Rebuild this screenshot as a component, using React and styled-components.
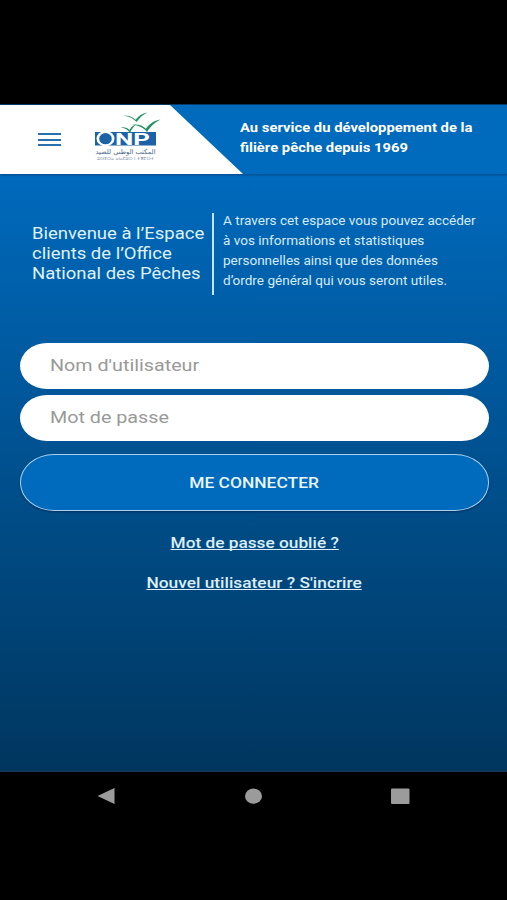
import { useState } from "react";
import styled, { createGlobalStyle } from "styled-components";

const GlobalStyle = createGlobalStyle`
  * {
    box-sizing: border-box;
  }
  body {
    margin: 0;
    background: #000;
    font-family: Roboto, "Noto Sans", sans-serif;
  }
`;
const Screen = styled.div`
  width: 507px;
  height: 900px;
  padding-top: 104px;
  background: #000;
  overflow: hidden;
`;
const Page = styled.main`
  height: 668px;
  display: flex;
  flex-direction: column;
  border-bottom: 1px solid #173a58;
  background: linear-gradient(180deg, #006abd 0%, #006abd 10%, #00365f 100%);
`;
const Header = styled.header`
  flex: none;
  height: 70px;
  display: flex;
  background: #006abd;
  border-top: 1px solid #003a68;
  box-shadow: 0 1px 2px rgba(0, 30, 70, 0.45);
`;
const Brand = styled.div`
  width: 243px;
  height: 69px;
  display: flex;
  background: #fff;
  clip-path: polygon(0 0, 170px 0, 100% 100%, 0 100%);
`;
const MenuButton = styled.button`
  width: 23px;
  height: 13px;
  margin: 28px 0 0 38px;
  padding: 0;
  display: flex;
  flex-direction: column;
  justify-content: space-between;
  border: none;
  background: none;
`;
const MenuBar = styled.span`
  height: 2px;
  background: #2b70ae;
`;
const LogoSvg = styled.svg`
  width: 72px;
  height: 54px;
  margin: 6px 0 0 31px;
  overflow: visible;
`;
// the type is wider than Roboto, each line is stretched from its origin
const Line = styled.span`
  display: block;
  width: max-content;
  white-space: nowrap;
  transform: scaleX(${(p) => p.$stretch || 1.16});
  transform-origin: ${(p) => p.$origin || "left"} center;
`;
const Slogan = styled.div`
  margin: 13px 0 0 -3px;
  color: #fff;
  font-size: 12.5px;
  font-weight: 700;
  line-height: 20px;
`;
const Intro = styled.section`
  display: flex;
  height: 82px;
  margin-top: 39px;
`;
const Title = styled.h1`
  width: 214px;
  margin: 0;
  padding: 11px 0 0 32px;
  border-right: 2px solid #c5e4f8;
  color: #dff0fb;
  font-size: 16px;
  font-weight: 400;
  line-height: 20px;
`;
const Description = styled.div`
  padding: 0 0 0 9px;
  margin-top: -2px;
  color: #d6ebf9;
  font-size: 12px;
  line-height: 20px;
`;
const Form = styled.form`
  margin: 48px 18px 0 20px;
  display: flex;
  flex-direction: column;
`;
const Field = styled.label`
  position: relative;
  height: 46px;
  margin-bottom: 6px;
  padding: 0 0 2px 30px;
  display: flex;
  align-items: center;
  border-radius: 27px / 23px;
  background: #fff;
  color: #999;
  font-size: 17px;
  line-height: 44px;
`;
const Input = styled.input`
  position: absolute;
  inset: 0;
  padding: 0 30px;
  border: none;
  outline: none;
  background: transparent;
  font-size: 17px;
`;
const SubmitButton = styled.button`
  height: 57px;
  margin-top: 7px;
  padding: 2px 0 0;
  display: flex;
  justify-content: center;
  align-items: center;
  border: 1.5px solid #a5d2f2;
  border-radius: 34px / 28px;
  background: #006abd;
  box-shadow: 0 1px 2px rgba(0, 20, 50, 0.5);
  color: #e8f5fd;
  font-family: inherit;
  font-size: 14.5px;
  font-weight: 500;
`;
const Links = styled.nav`
  display: flex;
  flex-direction: column;
  align-items: center;
  gap: 20px;
  margin-top: 23px;
  padding-left: 2px;
`;
const TextLink = styled(Line).attrs({ as: "a" })`
  color: #dceefa;
  font-size: 14.5px;
  font-weight: 500;
  line-height: 20px;
  text-decoration: underline;
  text-decoration-skip-ink: none;
  text-underline-offset: 1px;
`;
const SystemBar = styled.footer`
  display: flex;
  justify-content: space-between;
  padding: 15px 97px 0;
`;

const slogan = ["Au service du développement de la", "filière pêche depuis 1969"];
const title = ["Bienvenue à l’Espace", "clients de l’Office", "National des Pêches"];
const description = [
  "A travers cet espace vous pouvez accéder",
  "à vos informations et statistiques",
  "personnelles ainsi que des données",
  "d’ordre général qui vous seront utiles.",
];

const Logo = () => (
  <LogoSvg viewBox="0 0 72 54">
    <path d="M3 21h61v13.5H3z" fill="#1c62a6" />
    <ellipse cx="13.500" cy="27.700" rx="9" ry="7.600" fill="#fff" />
    <ellipse cx="13.500" cy="27.700" rx="6.300" ry="5.600" fill="#1c62a6" />
    <text
      x="23"
      y="34"
      fill="#fff"
      fontFamily="Roboto, sans-serif"
      fontSize="17"
      fontWeight="700"
      textLength="35"
      lengthAdjust="spacingAndGlyphs"
    >
      NP
    </text>
    <g fill="#259366">
      <path d="M31.5 4.5c5.500 0 9.500 1.500 12 4.300c3-3.800 6.500-6.300 12-7.300c-5 2.300-8 5.500-11 9.500c-3-3.500-7-5.500-13-6.500z" />
      <path d="M29 16.500c4-.5 6.500.5 8.500 2.500c1.500-3 3.500-4.500 6.500-5.500c-3 2.500-4.500 5-6 8.500c-2-3-4.500-5-9-5.500z" />
      <path d="M40 13.500c7-.5 11 1 13.800 4.300c3.500-5 8-8.300 14.700-9.300c-6 3-9.500 6.500-13.500 12.500c-3.500-4.500-8-6.500-15-7.500z" />
    </g>
    <text
      x="33.5"
      y="42.5"
      textAnchor="middle"
      fill="#46658c"
      fontFamily="DejaVu Sans, sans-serif"
      fontSize="6.5"
      textLength="60"
      lengthAdjust="spacingAndGlyphs"
    >
      المكتب الوطني للصيد
    </text>
    <text
      x="5"
      y="49"
      fill="#6f87a8"
      fontFamily="DejaVu Sans, sans-serif"
      fontSize="4"
      textLength="57"
      lengthAdjust="spacingAndGlyphs"
    >
      ⵓⵙⵉⵔⴰ ⴰⵏⴰⵎⵓⵔ ⵏ ⵜⴳⵎⵔⵜ
    </text>
  </LogoSvg>
);

const App = () => {
  //state
  const [username, setUsername] = useState("");
  const [password, setPassword] = useState("");

  return (
    <Screen>
      <GlobalStyle />
      <Page>
        <Header>
          <Brand>
            <MenuButton aria-label="Menu">
              <MenuBar />
              <MenuBar />
              <MenuBar />
            </MenuButton>
            <Logo />
          </Brand>
          <Slogan>
            {slogan.map((text) => (
              <Line key={text} $stretch={1.185}>
                {text}
              </Line>
            ))}
          </Slogan>
        </Header>
        <Intro>
          <Title>
            {title.map((text) => (
              <Line key={text} $stretch={1.155}>
                {text}
              </Line>
            ))}
          </Title>
          <Description>
            {description.map((text) => (
              <Line key={text} $stretch={1.13}>
                {text}
              </Line>
            ))}
          </Description>
        </Intro>
        <Form onSubmit={(e) => e.preventDefault()}>
          <Field>
            {!username && <Line>Nom d'utilisateur</Line>}
            <Input value={username} onChange={(e) => setUsername(e.target.value)} />
          </Field>
          <Field>
            {!password && <Line>Mot de passe</Line>}
            <Input
              type="password"
              value={password}
              onChange={(e) => setPassword(e.target.value)}
            />
          </Field>
          <SubmitButton type="submit">
            <Line $origin="center" $stretch={1.2}>
              ME CONNECTER
            </Line>
          </SubmitButton>
        </Form>
        <Links>
          <TextLink $origin="center" $stretch={1.19}>
            Mot de passe oublié ?
          </TextLink>
          <TextLink $origin="center" $stretch={1.195}>
            Nouvel utilisateur ? S'incrire
          </TextLink>
        </Links>
      </Page>
      <SystemBar>
        <svg width="18" height="18" viewBox="0 0 18 18">
          <path d="M0.5 9L17.5 1V17z" fill="#9b9b9b" />
        </svg>
        <svg width="18" height="18" viewBox="0 0 18 18">
          <ellipse cx="9.5" cy="9.2" rx="8.5" ry="7.6" fill="#9b9b9b" />
        </svg>
        <svg width="19" height="18" viewBox="0 0 19 18">
          <rect y="1.5" width="18.5" height="15.5" rx="1" fill="#9b9b9b" />
        </svg>
      </SystemBar>
    </Screen>
  );
};

export default App;
